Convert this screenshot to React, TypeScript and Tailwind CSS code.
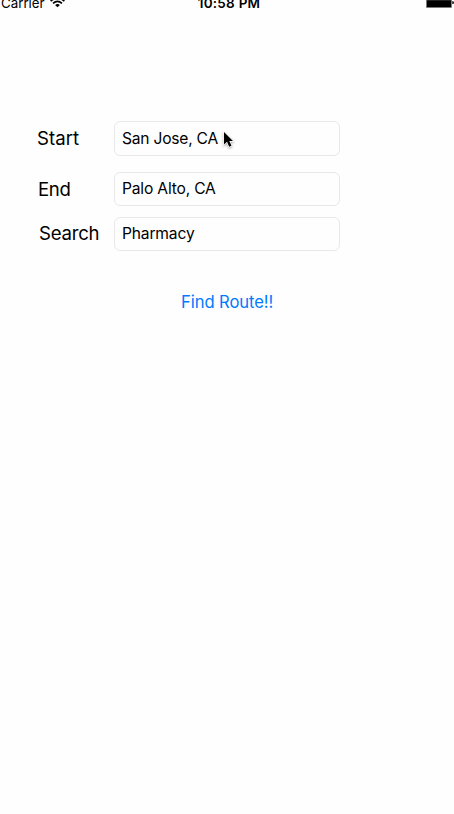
import React from "react";

type FieldProps = {
  label: string;
  value: string;
  rowClass: string;
  labelClass: string;
  valueClass: string;
  children?: React.ReactNode;
};

function Field({ label, value, rowClass, labelClass, valueClass, children }: FieldProps) {
  return (
    <div className={`flex items-center ${rowClass}`}>
      <div className="w-[114px] shrink-0">
        <label className={`block whitespace-nowrap text-[18.6px] leading-6 ${labelClass}`}>{label}</label>
      </div>
      <div className="relative flex h-full w-[226px] items-center rounded-[6px] border border-[#e8e8e8] bg-[#fefefe] pl-[7px]">
        <span className={`whitespace-nowrap text-[15.6px] leading-5 ${valueClass}`}>{value}</span>
        {children}
      </div>
    </div>
  );
}

function StatusBar() {
  return (
    <header className="flex h-[11px] items-end justify-between overflow-hidden">
      <div className="flex w-[150px] items-end">
        <span className="h-[16px] w-[50px] whitespace-nowrap pl-px text-[13.3px] leading-4">Carrier</span>
        <svg className="mb-[3px] h-[11px] w-[15px]" viewBox="0 0 15 11" fill="none">
          <path d="M0.6 4 Q7.5 -1.6 14.4 4" stroke="#000" strokeWidth="1.7" />
          <path d="M3 6.3 Q7.5 2.6 12 6.3" stroke="#000" strokeWidth="1.7" />
          <path d="M7.5 10.2 L5.1 7.9 Q7.5 5.9 9.9 7.9 Z" fill="#000" />
        </svg>
      </div>
      <span className="h-[16px] whitespace-nowrap pl-[4px] text-[13.5px] font-semibold leading-4 tracking-[0.25px]">10:58 PM</span>
      <div className="flex h-[11px] w-[150px] justify-end">
        <svg className="h-[11px] w-[28px]" viewBox="0 0 28 11">
          <path d="M0.5 0V7.5H25.5V0Z" fill="#000" stroke="#777" strokeWidth="0.6" />
          <path d="M26.3 1Q28 1.2 28 2.7Q28 4 26.3 4.3Z" fill="#000" />
        </svg>
      </div>
    </header>
  );
}

export default function App() {
  return (
    <main className="h-[814px] w-[454px] overflow-hidden bg-[#fefefe] font-['Inter','Liberation_Sans',sans-serif] text-black">
      <StatusBar />
      <form className="flex flex-col pt-[110px]">
        <Field label="Start" value="San Jose, CA" rowClass="h-[35px]" labelClass="pb-[2px] pl-[37px] tracking-[0.05px]" valueClass="tracking-[-0.22px]">
          <svg className="absolute left-[106px] top-[7px] h-[22px] w-[16px] drop-shadow-[0_1px_1px_rgba(0,0,0,0.35)]" viewBox="0 0 16 22">
            <path d="M3 3V15.5L6 12.8L8.2 17.8L10.5 16.8L8.3 12H12Z" fill="#000" stroke="#fff" strokeWidth="1.3" paintOrder="stroke" />
          </svg>
        </Field>
        <Field label="End" value="Palo Alto, CA" rowClass="mt-4 h-[34px]" labelClass="pb-px pl-[38px] tracking-[-0.35px]" valueClass="tracking-[-0.18px]" />
        <Field label="Search" value="Pharmacy" rowClass="mt-[11px] h-[34px]" labelClass="pb-[2px] pl-[39px] tracking-[-0.22px]" valueClass="tracking-[-0.17px]" />
        <button type="button" className="ml-[181px] mt-[39px] self-start whitespace-nowrap text-[16.6px] leading-6 tracking-[-0.08px] text-[#007aff]">
          Find Route!!
        </button>
      </form>
    </main>
  );
}
